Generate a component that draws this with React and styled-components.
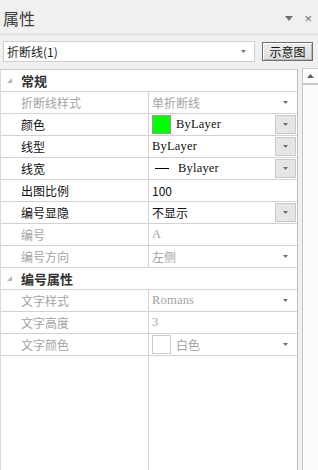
import React from 'react'
import styled, { createGlobalStyle } from 'styled-components'

const GlobalStyle = createGlobalStyle`
  html, body {
    margin: 0;
    padding: 0;
  }
  body {
    width: 318px;
    height: 470px;
    overflow: hidden;
    background: #f0f0f0;
    font-family: "Noto Sans CJK SC", "Liberation Sans", sans-serif;
  }
`

const general = [
  { label: '折断线样式', disabled: true, value: '单折断线', arrow: 'plain' },
  { label: '颜色', value: 'ByLayer', mono: true, swatch: '#00ff00', arrow: 'box' },
  { label: '线型', value: 'ByLayer', mono: true, arrow: 'box' },
  { label: '线宽', value: 'Bylayer', mono: true, line: true, arrow: 'box' },
  { label: '出图比例', value: '100' },
  { label: '编号显隐', value: '不显示', arrow: 'box' },
  { label: '编号', disabled: true, value: 'A', mono: true },
  { label: '编号方向', disabled: true, value: '左侧', arrow: 'plain' },
]

const numbering = [
  { label: '文字样式', disabled: true, value: 'Romans', mono: true, arrow: 'plain' },
  { label: '文字高度', disabled: true, value: '3', mono: true },
  { label: '文字颜色', disabled: true, value: '白色', swatch: '#ffffff', arrow: 'plain' },
]

const Caret = ({ w = 5, h = 3, up }) => (
  <svg width={w} height={h} viewBox={`0 0 ${w} ${h}`}>
    <path d={up ? `M0 ${h}H${w}L${w / 2} 0Z` : `M0 0H${w}L${w / 2} ${h}Z`} fill="currentColor" />
  </svg>
)

function PropRow({ item }) {
  return (
    <Row>
      <Label $disabled={item.disabled}>{item.label}</Label>
      <Value $disabled={item.disabled}>
        {item.swatch && <Swatch $color={item.swatch} $disabled={item.disabled} />}
        {item.line && <LineSample />}
        <ValueText $mono={item.mono}>{item.value}</ValueText>
        {item.arrow && (
          <DropBox $boxed={item.arrow === 'box'}>
            <Caret />
          </DropBox>
        )}
      </Value>
    </Row>
  )
}

function Category({ title }) {
  return (
    <CategoryRow>
      <svg width="5" height="5" viewBox="0 0 5 5">
        <path d="M5 0V5H0Z" fill="#b4b4b4" />
      </svg>
      <span>{title}</span>
    </CategoryRow>
  )
}

export default function App() {
  return (
    <Panel>
      <GlobalStyle />
      <TitleBar>
        <Title>属性</Title>
        <TitleTools>
          <Caret w={8} h={5} />
          <CloseMark>×</CloseMark>
        </TitleTools>
      </TitleBar>
      <Separator />
      <Toolbar>
        <Combo>
          <span>折断线(1)</span>
          <Caret />
        </Combo>
        <SketchButton>示意图</SketchButton>
      </Toolbar>
      <Body>
        <Grid>
          <Category title="常规" />
          {general.map(item => <PropRow key={item.label} item={item} />)}
          <Category title="编号属性" />
          {numbering.map(item => <PropRow key={item.label} item={item} />)}
          <Filler>
            <div />
            <div />
          </Filler>
        </Grid>
        <ScrollBar>
          <ScrollUp>
            <Caret w={7} h={4} up />
          </ScrollUp>
        </ScrollBar>
      </Body>
    </Panel>
  )
}

const Panel = styled.div`
  width: 318px;
  height: 470px;
  display: flex;
  flex-direction: column;
  background: #f0f0f0;
`

const TitleBar = styled.div`
  height: 33px;
  box-sizing: border-box;
  padding: 3px 6px 0 3px;
  display: flex;
  align-items: center;
  justify-content: space-between;
`

const Title = styled.div`
  font-size: 16px;
  color: #3c3c3c;
  line-height: 1;
`

const TitleTools = styled.div`
  display: flex;
  align-items: center;
  gap: 11px;
  color: #707070;
`

const CloseMark = styled.span`
  font-family: "Liberation Sans", sans-serif;
  font-size: 13px;
  line-height: 1;
`

const Separator = styled.div`
  height: 3px;
  background: #e6e6e6;
`

const Toolbar = styled.div`
  display: flex;
  align-items: flex-start;
  padding: 5px 5px 7px 3px;
  gap: 7px;
`

const Combo = styled.div`
  width: 253px;
  height: 21px;
  box-sizing: border-box;
  border: 1px solid #cfcfcf;
  background: #fff;
  display: flex;
  align-items: center;
  justify-content: space-between;
  padding: 0 8px 0 3px;
  font-size: 12px;
  color: #1e1e1e;
  svg { color: #777; }
`

const SketchButton = styled.div`
  margin-top: 1px;
  width: 51px;
  height: 19px;
  box-sizing: border-box;
  border: 1px solid #6f6f6f;
  box-shadow: inset 1px 1px 0 #fff, inset -1px -1px 0 #b8b8b8;
  background: linear-gradient(#ececec, #dcdcdc);
  font-size: 12px;
  line-height: 17px;
  text-align: center;
  color: #111;
`

const Body = styled.div`
  flex: 1;
  display: flex;
  gap: 4px;
  min-height: 0;
`

const Grid = styled.div`
  width: 298px;
  box-sizing: border-box;
  background: #fff;
  border-top: 1px solid #cdcdcd;
  border-left: 1px solid #dadada;
  border-right: 1px solid #bdbdbd;
  display: flex;
  flex-direction: column;
`

const Row = styled.div`
  height: 22px;
  box-sizing: border-box;
  border-bottom: 1px solid #d2d2d2;
  display: grid;
  grid-template-columns: 148px 1fr;
`

const CategoryRow = styled.div`
  height: 22px;
  box-sizing: border-box;
  border-bottom: 1px solid #d2d2d2;
  display: flex;
  align-items: center;
  padding-left: 6px;
  gap: 9px;
  font-size: 13px;
  font-weight: bold;
  color: #333;
`

const Label = styled.div`
  border-right: 1px solid #d2d2d2;
  padding-left: 20px;
  display: flex;
  align-items: center;
  font-size: 12px;
  color: ${p => (p.$disabled ? '#a3a3a3' : '#111')};
`

const Value = styled.div`
  display: flex;
  align-items: center;
  padding-left: 3px;
  font-size: 12px;
  color: ${p => (p.$disabled ? '#a3a3a3' : '#111')};
`

const ValueText = styled.span`
  font-family: ${p => (p.$mono ? '"Liberation Serif", serif' : 'inherit')};
  font-size: ${p => (p.$mono ? '12.5px' : '12px')};
  letter-spacing: ${p => (p.$mono ? '0.2px' : '0')};
`

const Swatch = styled.div`
  width: 19px;
  height: 19px;
  box-sizing: border-box;
  border: 1px solid ${p => (p.$disabled ? '#cccccc' : '#9a9a9a')};
  background: ${p => p.$color};
  margin-right: 5px;
`

const LineSample = styled.div`
  width: 14px;
  height: 1px;
  background: #000;
  margin: 0 9px 0 3px;
`

const DropBox = styled.div`
  width: 21px;
  height: 19px;
  box-sizing: border-box;
  margin-left: auto;
  margin-right: 1px;
  display: flex;
  align-items: center;
  justify-content: center;
  border: 1px solid ${p => (p.$boxed ? '#c8c8c8' : 'transparent')};
  background: ${p => (p.$boxed ? '#e6e6e6' : 'transparent')};
  color: #707070;
`

const Filler = styled.div`
  flex: 1;
  display: grid;
  grid-template-columns: 148px 1fr;
  div:first-child { border-right: 1px solid #d2d2d2; }
`

const ScrollBar = styled.div`
  flex: 1;
  box-sizing: border-box;
  margin-top: -1px;
  border-left: 1px solid #c6c6c6;
  border-top: 1px solid #cfcfcf;
  background: #fcfcfc;
`

const ScrollUp = styled.div`
  height: 16px;
  box-sizing: border-box;
  border-bottom: 2px solid #c9c9c9;
  display: flex;
  align-items: center;
  justify-content: center;
  color: #5e5e5e;
`
